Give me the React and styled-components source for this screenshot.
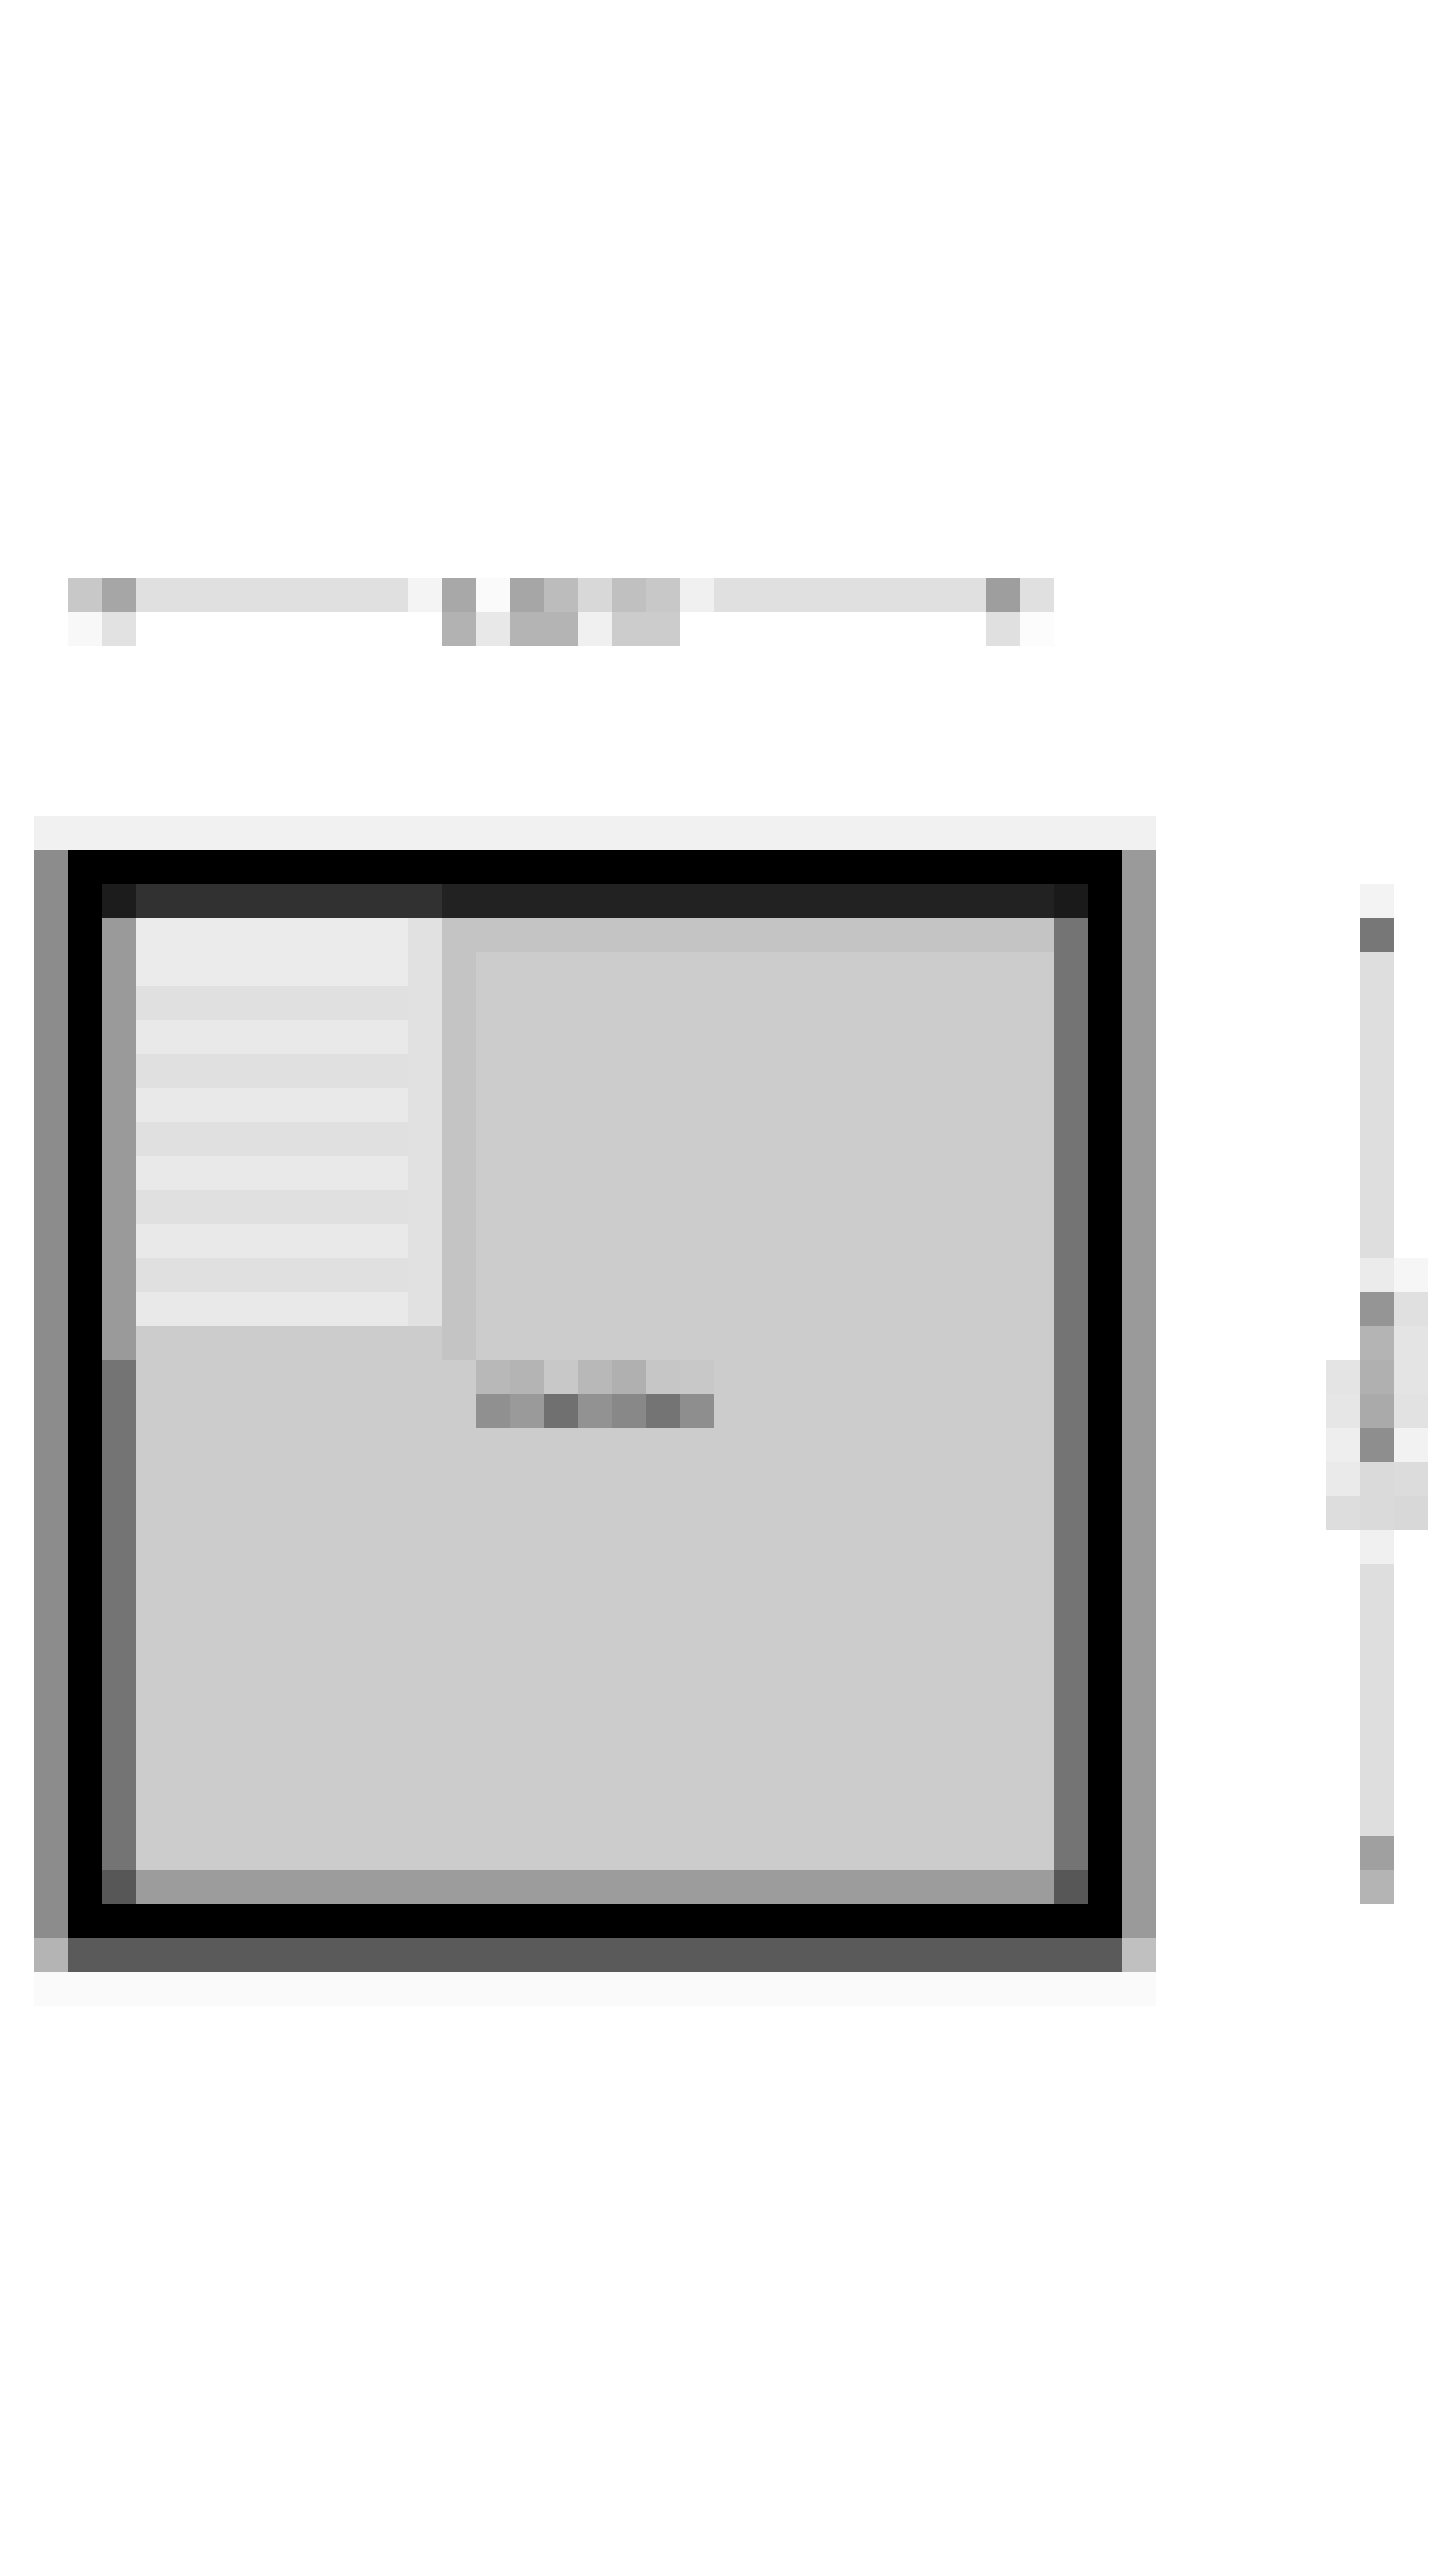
import React from 'react'
import styled, { createGlobalStyle } from 'styled-components'

// one block of the low-res mockup, in page pixels
const U = 34
const u = n => `${n * U}px`

const GlobalStyle = createGlobalStyle`
  html, body {
    margin: 0;
    padding: 0;
    background: #ffffff;
  }
  * {
    box-sizing: border-box;
  }
`

const Page = styled.div`
  width: 1440px;
  min-height: 2560px;
  padding-top: ${u(17)};
  background: #ffffff;
  font-family: "Liberation Sans", Arial, sans-serif;
`

const Toolbar = styled.div`
  display: flex;
  flex-direction: column;
  margin-left: ${u(2)};
`

const Row = styled.div`
  display: flex;
  height: ${u(1)};
`

const Cell = styled.div`
  flex: none;
  width: ${p => u(p.$w || 1)};
  height: 100%;
  background: ${p => p.$bg};
`

const Scene = styled.div`
  display: flex;
  align-items: flex-start;
  margin-top: ${u(5)};
  padding-left: ${u(1)};
`

const WindowShell = styled.div`
  display: flex;
  flex-direction: column;
  width: ${u(33)};
`

const Haze = styled.div`
  height: ${u(1)};
  background: ${p => p.$bg};
`

const ShellRow = styled.div`
  display: flex;
  height: ${u(32)};
`

const Shade = styled.div`
  width: ${u(1)};
  background: ${p => p.$bg};
`

const Frame = styled.div`
  display: flex;
  flex-direction: column;
  width: ${u(31)};
  padding: ${u(1)};
  background: #000000;
`

const Body = styled.div`
  display: flex;
  height: ${u(28)};
`

const Edge = styled.div`
  width: ${u(1)};
  background: ${p => p.$split
    ? `linear-gradient(to bottom, ${p.$top} 0 ${u(p.$split)}, ${p.$bg} ${u(p.$split)})`
    : p.$bg};
`

const Main = styled.div`
  display: flex;
  align-items: flex-start;
  width: ${u(27)};
  background: #cccccc;
`

const Sidebar = styled.ul`
  display: flex;
  flex-direction: column;
  width: ${u(9)};
  margin: 0;
  padding: 0;
  list-style: none;
`

const SidebarItem = styled.li`
  height: ${u(1)};
  background: linear-gradient(to right, ${p => p.$bg} 0 ${u(8)}, #e1e1e1 ${u(8)});
`

const Divider = styled.div`
  width: ${u(1)};
  height: ${u(13)};
  background: #c4c4c4;
`

const Content = styled.div`
  display: flex;
  flex-direction: column;
  flex: 1;
`

const ContentHeader = styled.div`
  height: ${u(1)};
  background: #c4c4c4;
`

const Caption = styled.div`
  display: grid;
  grid-template-columns: repeat(7, ${u(1)});
  grid-auto-rows: ${u(1)};
  margin-top: ${u(12)};
`

const Glyph = styled.span`
  background: ${p => p.$bg};
`

const SliderDock = styled.div`
  display: flex;
  align-items: flex-start;
  margin-left: ${u(5)};
  margin-top: ${u(2)};
`

const Column = styled.div`
  display: flex;
  flex-direction: column;
  width: ${u(1)};
  margin-top: ${p => u(p.$offset || 0)};
`

const Block = styled.div`
  height: ${p => u(p.$h || 1)};
  background: ${p => p.$bg};
`

const toolbarTop = [
  [1, '#c8c8c8'], [1, '#a6a6a6'], [8, '#e0e0e0'], [1, '#f4f4f4'],
  [1, '#a8a8a8'], [1, '#fafafa'], [1, '#a6a6a6'], [1, '#bcbcbc'],
  [1, '#d8d8d8'], [1, '#c0c0c0'], [1, '#c8c8c8'], [1, '#f0f0f0'],
  [8, '#e0e0e0'], [1, '#9e9e9e'], [1, '#e0e0e0']
]

const toolbarBottom = [
  [1, '#f8f8f8'], [1, '#e2e2e2'], [9, '#ffffff'], [1, '#b2b2b2'],
  [1, '#e8e8e8'], [2, '#b4b4b4'], [1, '#f0f0f0'], [2, '#cccccc'],
  [9, '#ffffff'], [1, '#e0e0e0'], [1, '#fcfcfc']
]

const titleBar = [[1, '#1c1c1c'], [9, '#313131'], [18, '#222222'], [1, '#1a1a1a']]
const bottomBar = [[1, '#575757'], [27, '#9c9c9c'], [1, '#575757']]
const footer = [[1, '#b4b4b4'], [31, '#5a5a5a'], [1, '#c0c0c0']]

const sidebarItems = [
  '#ebebeb', '#ebebeb',
  '#e0e0e0', '#e9e9e9', '#e0e0e0', '#e9e9e9', '#e0e0e0',
  '#e9e9e9', '#e0e0e0', '#e9e9e9', '#e0e0e0', '#e9e9e9'
]

const caption = [
  '#b8b8b8', '#b4b4b4', '#c8c8c8', '#b8b8b8', '#b0b0b0', '#c6c6c6', '#c8c8c8',
  '#909090', '#9a9a9a', '#707070', '#929292', '#888888', '#747474', '#8e8e8e'
]

const rail = [
  [1, '#f3f3f3'], [1, '#777777'], [9, '#dedede'],
  [1, '#ebebeb'], [1, '#959595'], [1, '#b4b4b4'], [1, '#b0b0b0'],
  [1, '#aaaaaa'], [1, '#8e8e8e'], [1, '#dadada'], [1, '#dadada'],
  [1, '#f0f0f0'], [8, '#dedede'], [1, '#a0a0a0'], [1, '#b4b4b4']
]

const thumbLeft = ['#e4e4e4', '#e6e6e6', '#eeeeee', '#eaeaea', '#dddddd']
const thumbRight = ['#f6f6f6', '#e0e0e0', '#e4e4e4', '#e4e4e4', '#e2e2e2', '#f2f2f2', '#dcdcdc', '#d8d8d8']

const Strip = ({ parts }) => (
  <Row>
    {parts.map(([w, bg], i) => <Cell key={i} $w={w} $bg={bg} />)}
  </Row>
)

export default function App() {
  return (
    <Page>
      <GlobalStyle />
      <Toolbar>
        <Strip parts={toolbarTop} />
        <Strip parts={toolbarBottom} />
      </Toolbar>

      <Scene>
        <WindowShell>
          <Haze $bg="#f1f1f1" />
          <ShellRow>
            <Shade $bg="#8c8c8c" />
            <Frame>
              <Strip parts={titleBar} />
              <Body>
                <Edge $split={13} $top="#9a9a9a" $bg="#747474" />
                <Main>
                  <Sidebar>
                    {sidebarItems.map((bg, i) => <SidebarItem key={i} $bg={bg} />)}
                  </Sidebar>
                  <Divider />
                  <Content>
                    <ContentHeader />
                    <Caption>
                      {caption.map((bg, i) => <Glyph key={i} $bg={bg} />)}
                    </Caption>
                  </Content>
                </Main>
                <Edge $bg="#747474" />
              </Body>
              <Strip parts={bottomBar} />
            </Frame>
            <Shade $bg="#9a9a9a" />
          </ShellRow>
          <Strip parts={footer} />
          <Haze $bg="#fafafa" />
        </WindowShell>

        <SliderDock>
          <Column $offset={14}>
            {thumbLeft.map((bg, i) => <Block key={i} $bg={bg} />)}
          </Column>
          <Column>
            {rail.map(([h, bg], i) => <Block key={i} $h={h} $bg={bg} />)}
          </Column>
          <Column $offset={11}>
            {thumbRight.map((bg, i) => <Block key={i} $bg={bg} />)}
          </Column>
        </SliderDock>
      </Scene>
    </Page>
  )
}
